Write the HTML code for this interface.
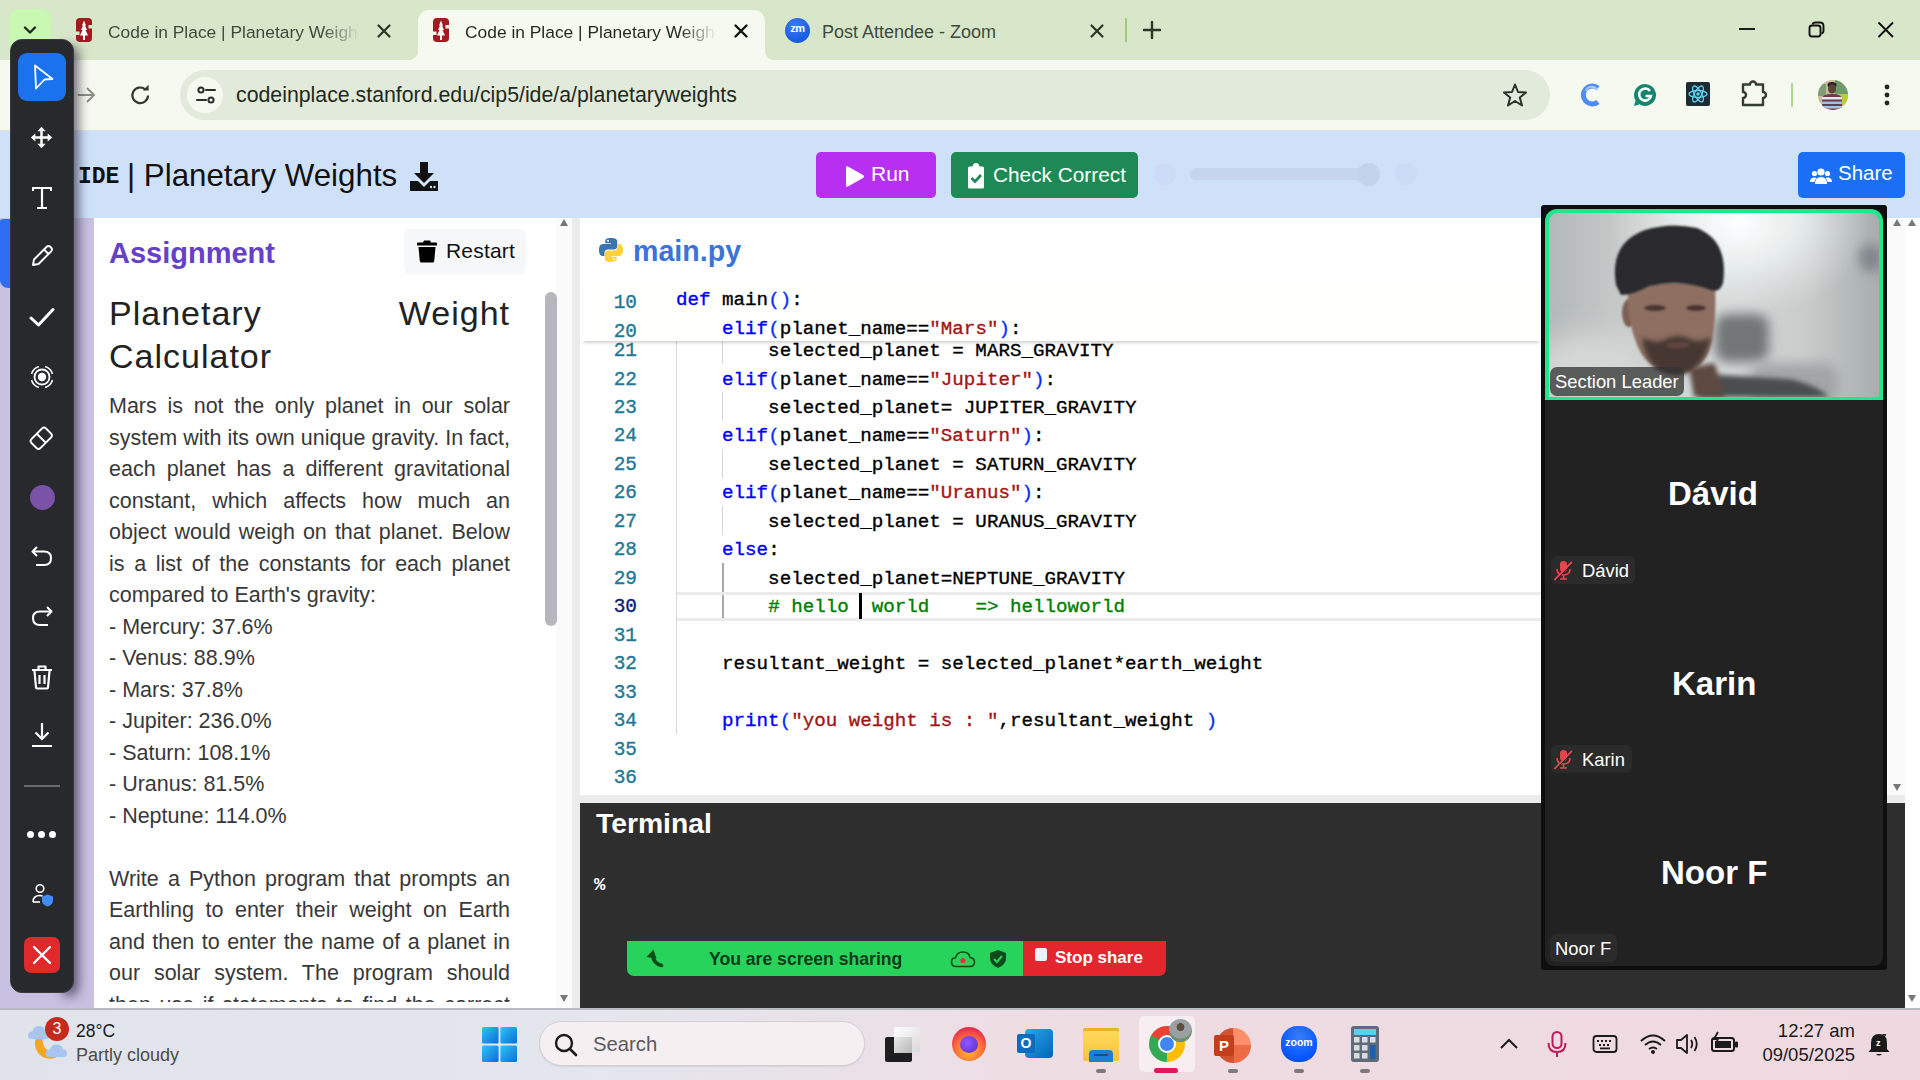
<!DOCTYPE html>
<html><head><meta charset="utf-8">
<style>
*{margin:0;padding:0;box-sizing:border-box}
html,body{width:1920px;height:1080px;overflow:hidden;background:#fff;font-family:"Liberation Sans",sans-serif}
.a{position:absolute}
.mono{font-family:"Liberation Mono",monospace}
#tabbar{left:0;top:0;width:1920px;height:60px;background:#d8e6ca}
#toolbar{left:0;top:60px;width:1920px;height:70px;background:#f6f9ef}
#sep{left:0;top:130px;width:1920px;height:1px;background:#dfe3dc}
#band{left:0;top:131px;width:1920px;height:87px;background:#cfe0f9}
#main{left:0;top:218px;width:1920px;height:790px;background:#fff}
#lav{left:0;top:218px;width:94px;height:790px;background:#c9c1e1}
#taskbar{left:0;top:1008px;width:1920px;height:72px;background:linear-gradient(90deg,#e0e4ea 0%,#e4e6ee 30%,#eedde3 55%,#efd9e0 100%)}
.tabt{font-size:18px;color:#3f4a3c;white-space:nowrap;top:20px}
.code{font-family:"Liberation Mono",monospace;font-size:19.2px;white-space:pre;color:#000;line-height:28.5px;height:28.5px;margin-top:1.8px;-webkit-text-stroke-width:0.35px}
.ln{font-family:"Liberation Mono",monospace;font-size:19.4px;color:#237893;text-align:right;width:60px;left:577px;line-height:28.5px;margin-top:1.8px;-webkit-text-stroke-width:0.35px}
.kw{color:#0000ff}
.br{color:#0431fa}
.st{color:#a31515}
.cm{color:#008000}
.jl{text-align:justify;text-align-last:justify;white-space:nowrap;height:31.5px}
.pl{white-space:nowrap;height:31.5px}
.ptxt{font-size:21.5px;color:#333;line-height:31.5px;left:109px;width:401px;text-align:justify;text-align-last:justify;white-space:nowrap}
</style></head><body>
<div id="tabbar" class="a"></div>
<div id="toolbar" class="a"></div>
<div id="sep" class="a"></div>
<div id="band" class="a"></div>
<div id="main" class="a"></div>
<div id="lav" class="a"></div>
<div id="taskbar" class="a"></div>

<!-- TAB BAR -->
<div class="a" style="left:9px;top:9px;width:42px;height:43px;border-radius:10px;background:#c8f8b2"></div>
<svg class="a" style="left:20px;top:20px" width="20" height="20" viewBox="0 0 20 20"><path d="M5 7.5 L10 12.5 L15 7.5" fill="none" stroke="#1f2a1c" stroke-width="2.4" stroke-linecap="round" stroke-linejoin="round"/></svg>
<!-- tab1 -->
<svg class="a" style="left:76px;top:18px" width="16" height="24" viewBox="0 0 16 24"><rect x="0" y="0" width="16" height="24" rx="4" fill="#a31b1f"/><rect x="12.5" y="7" width="3.5" height="3.5" fill="#d8e6ca"/><rect x="0" y="13.5" width="3.5" height="3.5" fill="#d8e6ca"/><path d="M8 2.5 L10 7.5 H9 L11 12 H9.5 L12 17.5 H9 V22 H7 V17.5 H4 L6.5 12 H5 L7 7.5 H6 Z" fill="#fff"/></svg>
<div class="a tabt" style="left:108px;top:22px;font-size:17.4px;width:252px;overflow:hidden;-webkit-mask-image:linear-gradient(90deg,#000 85%,transparent)">Code in Place | Planetary Weigh</div>
<svg class="a" style="left:375px;top:22px" width="18" height="18" viewBox="0 0 18 18"><path d="M3.5 3.5 L14.5 14.5 M14.5 3.5 L3.5 14.5" stroke="#2b3528" stroke-width="2.2" stroke-linecap="round"/></svg>
<!-- active tab -->
<div class="a" style="left:418px;top:10px;width:347px;height:50px;background:#f6f9ef;border-radius:11px 11px 0 0"></div>
<div class="a" style="left:408px;top:50px;width:10px;height:10px;background:radial-gradient(circle at 0 0,transparent 10px,#f6f9ef 10.5px)"></div>
<div class="a" style="left:765px;top:50px;width:10px;height:10px;background:radial-gradient(circle at 100% 0,transparent 10px,#f6f9ef 10.5px)"></div>
<svg class="a" style="left:433px;top:18px" width="16" height="24" viewBox="0 0 16 24"><rect x="0" y="0" width="16" height="24" rx="4" fill="#a31b1f"/><rect x="12.5" y="7" width="3.5" height="3.5" fill="#f6f9ef"/><rect x="0" y="13.5" width="3.5" height="3.5" fill="#f6f9ef"/><path d="M8 2.5 L10 7.5 H9 L11 12 H9.5 L12 17.5 H9 V22 H7 V17.5 H4 L6.5 12 H5 L7 7.5 H6 Z" fill="#fff"/></svg>
<div class="a tabt" style="left:465px;top:22px;font-size:17.4px;color:#1f2a1c;width:252px;overflow:hidden;-webkit-mask-image:linear-gradient(90deg,#000 85%,transparent)">Code in Place | Planetary Weigh</div>
<svg class="a" style="left:732px;top:22px" width="18" height="18" viewBox="0 0 18 18"><path d="M3.5 3.5 L14.5 14.5 M14.5 3.5 L3.5 14.5" stroke="#111" stroke-width="2.4" stroke-linecap="round"/></svg>
<!-- tab3 zoom -->
<div class="a" style="left:785px;top:18px;width:25px;height:25px;border-radius:50%;background:radial-gradient(circle at 40% 30%,#3d7bf5,#0b4fd8)"></div>
<div class="a" style="left:785px;top:22px;width:25px;text-align:center;font-size:11px;font-weight:bold;color:#fff;letter-spacing:-0.5px">zm</div>
<div class="a tabt" style="left:822px;top:22px;font-size:18px">Post Attendee - Zoom</div>
<svg class="a" style="left:1088px;top:22px" width="18" height="18" viewBox="0 0 18 18"><path d="M3.5 3.5 L14.5 14.5 M14.5 3.5 L3.5 14.5" stroke="#2b3528" stroke-width="2.2" stroke-linecap="round"/></svg>
<div class="a" style="left:1125px;top:18px;width:2px;height:24px;background:#9ccf7e"></div>
<svg class="a" style="left:1141px;top:19px" width="22" height="22" viewBox="0 0 22 22"><path d="M11 3 V19 M3 11 H19" stroke="#2b3528" stroke-width="2.4" stroke-linecap="round"/></svg>
<!-- window controls -->
<div class="a" style="left:1739px;top:28px;width:16px;height:2px;background:#1d1d1d"></div>
<svg class="a" style="left:1806px;top:20px" width="20" height="20" viewBox="0 0 20 20"><rect x="3.5" y="5.5" width="11" height="11" rx="2.5" fill="none" stroke="#111" stroke-width="1.9"/><path d="M6.5 4.5 Q7 2.5 9.5 2.5 H14 Q17.5 2.5 17.5 6 V10.5 Q17.5 13 15.5 13.5" fill="none" stroke="#111" stroke-width="1.9"/></svg>
<svg class="a" style="left:1877px;top:21px" width="18" height="18" viewBox="0 0 18 18"><path d="M1.5 1.5 L16 16 M16 1.5 L1.5 16" stroke="#111" stroke-width="1.9"/></svg>

<!-- TOOLBAR -->
<svg class="a" style="left:74px;top:83px" width="24" height="24" viewBox="0 0 24 24"><path d="M4 12 H20 M13 5 L20 12 L13 19" fill="none" stroke="#8a9088" stroke-width="2"/></svg>
<svg class="a" style="left:128px;top:82px" width="26" height="26" viewBox="0 0 26 26"><path d="M20 13.5 A7.8 7.8 0 1 1 17.5 7.6" fill="none" stroke="#333a31" stroke-width="2.2"/><path d="M14.8 8.6 H20.6 V2.8 Z" fill="#333a31"/></svg>
<div class="a" style="left:180px;top:70px;width:1370px;height:50px;border-radius:25px;background:#e2eadb"></div>
<div class="a" style="left:187px;top:77px;width:36px;height:36px;border-radius:50%;background:#f6f9ef"></div>
<svg class="a" style="left:194px;top:83px" width="24" height="24" viewBox="0 0 24 24"><circle cx="7" cy="7" r="2.6" fill="none" stroke="#2b2f2a" stroke-width="2"/><path d="M12 7 H21" stroke="#2b2f2a" stroke-width="2.2" stroke-linecap="round"/><circle cx="17" cy="17" r="2.6" fill="none" stroke="#2b2f2a" stroke-width="2"/><path d="M3 17 H12" stroke="#2b2f2a" stroke-width="2.2" stroke-linecap="round"/></svg>
<div class="a" style="left:236px;top:83px;font-size:21.3px;color:#1f2a1c;white-space:nowrap">codeinplace.stanford.edu/cip5/ide/a/planetaryweights</div>
<svg class="a" style="left:1502px;top:82px" width="26" height="26" viewBox="0 0 26 26"><path d="M13 2.5 L16 10 L24 10.5 L17.8 15.5 L20 23.5 L13 19 L6 23.5 L8.2 15.5 L2 10.5 L10 10 Z" fill="none" stroke="#2b3228" stroke-width="2" stroke-linejoin="round"/></svg>
<svg class="a" style="left:1578px;top:82px" width="26" height="26" viewBox="0 0 26 26"><path d="M20 6 A9 9 0 1 0 20 20" fill="none" stroke="#4d8df0" stroke-width="5"/><path d="M19 8 A6 6 0 0 0 8 9" fill="none" stroke="#a9c8fa" stroke-width="2"/></svg>
<svg class="a" style="left:1632px;top:82px" width="26" height="26" viewBox="0 0 26 26"><path d="M13 2 A11 11 0 1 1 3.5 18.5 L2 24 L7.5 22.5 A11 11 0 0 1 13 2Z" fill="#15846e"/><path d="M18 9 A6 6 0 1 0 19 14 H13.5" fill="none" stroke="#fff" stroke-width="2.6"/></svg>
<div class="a" style="left:1686px;top:82px;width:24px;height:24px;background:#1d2b34;border-radius:2px"></div>
<svg class="a" style="left:1686px;top:82px" width="24" height="24" viewBox="0 0 24 24"><ellipse cx="12" cy="12" rx="9" ry="3.5" fill="none" stroke="#5ed3f3" stroke-width="1.3"/><ellipse cx="12" cy="12" rx="9" ry="3.5" fill="none" stroke="#5ed3f3" stroke-width="1.3" transform="rotate(60 12 12)"/><ellipse cx="12" cy="12" rx="9" ry="3.5" fill="none" stroke="#5ed3f3" stroke-width="1.3" transform="rotate(-60 12 12)"/><circle cx="12" cy="12" r="1.8" fill="#5ed3f3"/></svg>
<svg class="a" style="left:1740px;top:80px" width="28" height="28" viewBox="0 0 28 28"><path d="M3 4.5 H10 A3 3 0 0 1 16 4.5 H23 V12 A3 3 0 0 1 23 18 V25 H3 V18 A3 3 0 0 0 3 12 Z" fill="none" stroke="#333d30" stroke-width="2.4" stroke-linejoin="round"/></svg>
<div class="a" style="left:1791px;top:83px;width:2px;height:24px;background:#a8dc8c"></div>
<svg class="a" style="left:1818px;top:80px" width="30" height="30" viewBox="0 0 30 30"><defs><clipPath id="avc"><circle cx="15" cy="15" r="15"/></clipPath></defs><g clip-path="url(#avc)"><rect width="30" height="30" fill="#c8bd98"/><rect x="17" y="0" width="13" height="14" fill="#6f9a6a"/><rect x="22" y="14" width="8" height="12" fill="#b9cc3c"/><rect x="0" y="4" width="8" height="12" fill="#7e9d78"/><ellipse cx="14" cy="5" rx="4.5" ry="3" fill="#2b2623"/><ellipse cx="14" cy="9" rx="4" ry="4.5" fill="#5c4637"/><path d="M4 30 V19 Q4 14 14 14 Q24 14 24 19 V30 Z" fill="#6b3a4e"/><rect x="4" y="17" width="20" height="2.5" fill="#e6e6ee"/><rect x="4" y="21.5" width="20" height="2.5" fill="#9fc0e6"/><rect x="4" y="26" width="20" height="2.5" fill="#a0c4ea"/></g></svg>
<svg class="a" style="left:1877px;top:82px" width="20" height="26" viewBox="0 0 20 26"><circle cx="10" cy="5" r="2.4" fill="#1f2a1c"/><circle cx="10" cy="13" r="2.4" fill="#1f2a1c"/><circle cx="10" cy="21" r="2.4" fill="#1f2a1c"/></svg>

<!-- HEADER BAND -->
<div class="a" style="left:78px;top:164px;font-family:'Liberation Mono',monospace;font-weight:bold;font-size:23px;color:#111;white-space:nowrap">IDE</div>
<div class="a" style="left:127px;top:158px;font-size:31.3px;color:#111;white-space:nowrap">| Planetary Weights</div>
<svg class="a" style="left:408px;top:160px" width="32" height="32" viewBox="0 0 32 32"><path d="M12 2 H20 V13 H26 L16 23 L6 13 H12 Z" fill="#111"/><path d="M2 21 H10 L16 27 L22 21 H30 V31 H2 Z" fill="#111"/><circle cx="23" cy="27" r="1.2" fill="#cfe0f9"/><circle cx="26.5" cy="27" r="1.2" fill="#cfe0f9"/></svg>
<div class="a" style="left:816px;top:152px;width:120px;height:46px;border-radius:5px;background:#b730f1"></div>
<svg class="a" style="left:844px;top:165px" width="22" height="23" viewBox="0 0 22 23"><path d="M2 2.5 Q2 0.5 4 1.5 L19 10 Q21 11.5 19 13 L4 21.5 Q2 22.5 2 20.5 Z" fill="#fff"/></svg>
<div class="a" style="left:871px;top:162px;font-size:21px;color:#fff;white-space:nowrap">Run</div>
<div class="a" style="left:951px;top:152px;width:187px;height:46px;border-radius:5px;background:#1d8a55"></div>
<svg class="a" style="left:966px;top:163px" width="20" height="26" viewBox="0 0 20 26"><path d="M2 5 Q2 3.5 3.5 3.5 H6.5 Q7 0 10 0 Q13 0 13.5 3.5 H16.5 Q18 3.5 18 5 V24 Q18 25.5 16.5 25.5 H3.5 Q2 25.5 2 24 Z" fill="#fff"/><path d="M5.5 15 L9 18.5 L15 12" fill="none" stroke="#1d8a55" stroke-width="2.6"/></svg>
<div class="a" style="left:993px;top:162.5px;font-size:20.8px;color:#fff;white-space:nowrap">Check Correct</div>
<div class="a" style="left:1154px;top:163px;width:22px;height:22px;border-radius:50%;background:#ccdcf6"></div>
<div class="a" style="left:1190px;top:168px;width:190px;height:12px;border-radius:6px;background:#c5d5ee"></div>
<div class="a" style="left:1357px;top:163px;width:23px;height:23px;border-radius:50%;background:#c3d3ec"></div>
<div class="a" style="left:1395px;top:163px;width:22px;height:22px;border-radius:50%;background:#ccdcf6"></div>
<div class="a" style="left:1798px;top:152px;width:107px;height:46px;border-radius:5px;background:#1b6ff4"></div>
<svg class="a" style="left:1810px;top:166px" width="22" height="20" viewBox="0 0 22 20"><circle cx="11" cy="6" r="3.6" fill="#fff"/><circle cx="4.5" cy="7.5" r="2.6" fill="#fff"/><circle cx="17.5" cy="7.5" r="2.6" fill="#fff"/><path d="M5 18 Q5 11 11 11 Q17 11 17 18 Z" fill="#fff"/><path d="M0 16 Q0 11.5 4.5 11.5 Q6 11.5 6.5 12 Q4.5 14 4.5 16 Z" fill="#fff"/><path d="M22 16 Q22 11.5 17.5 11.5 Q16 11.5 15.5 12 Q17.5 14 17.5 16 Z" fill="#fff"/></svg>
<div class="a" style="left:1838px;top:161px;font-size:20.5px;color:#fff;white-space:nowrap">Share</div>

<!-- MAIN PANELS -->
<div class="a" style="left:556px;top:218px;width:16px;height:790px;background:#fafafa"></div>
<div class="a" style="left:572px;top:218px;width:8px;height:790px;background:#ebebeb"></div>
<div class="a" style="left:560px;top:219px;width:0;height:0;border-left:4.5px solid transparent;border-right:4.5px solid transparent;border-bottom:7px solid #777"></div>
<div class="a" style="left:560px;top:995px;width:0;height:0;border-left:4.5px solid transparent;border-right:4.5px solid transparent;border-top:7px solid #777"></div>
<div class="a" style="left:545px;top:292px;width:12px;height:334px;border-radius:6px;background:#b7b6bc"></div>
<div class="a" style="left:109px;top:237px;font-size:29px;font-weight:bold;color:#6541c9;white-space:nowrap">Assignment</div>
<div class="a" style="left:404px;top:229px;width:122px;height:45px;border-radius:6px;background:#f6f7f9"></div>
<svg class="a" style="left:417px;top:240px" width="20" height="23" viewBox="0 0 20 23"><path d="M7 0.5 H13 L14 2.5 H19 Q20 2.5 20 3.5 V5.5 H0 V3.5 Q0 2.5 1 2.5 H6 Z" fill="#000"/><path d="M1.5 7 H18.5 L17.2 21 Q17 22.5 15.5 22.5 H4.5 Q3 22.5 2.8 21 Z" fill="#000"/></svg>
<div class="a" style="left:446px;top:239px;font-size:21px;color:#111;white-space:nowrap;letter-spacing:0.2px">Restart</div>
<div class="a" style="left:109px;top:292px;width:401px;font-size:34px;color:#222;line-height:43px;letter-spacing:1px">
<div style="text-align:justify;text-align-last:justify">Planetary Weight</div><div>Calculator</div></div>
<div class="a" id="para" style="left:109px;top:391px;width:401px;height:611px;overflow:hidden;font-size:21.5px;color:#383838;line-height:31.5px"><div class="jl">Mars is not the only planet in our solar</div><div class="jl">system with its own unique gravity. In fact,</div><div class="jl">each planet has a different gravitational</div><div class="jl">constant, which affects how much an</div><div class="jl">object would weigh on that planet. Below</div><div class="jl">is a list of the constants for each planet</div><div class="pl">compared to Earth's gravity:</div><div class="pl">- Mercury: 37.6%</div><div class="pl">- Venus: 88.9%</div><div class="pl">- Mars: 37.8%</div><div class="pl">- Jupiter: 236.0%</div><div class="pl">- Saturn: 108.1%</div><div class="pl">- Uranus: 81.5%</div><div class="pl">- Neptune: 114.0%</div><div class="pl">&nbsp;</div><div class="jl">Write a Python program that prompts an</div><div class="jl">Earthling to enter their weight on Earth</div><div class="jl">and then to enter the name of a planet in</div><div class="jl">our solar system. The program should</div><div class="jl">then use if statements to find the correct</div></div>

<!-- EDITOR -->
<div class="a" style="left:598px;top:237px"><svg width="26" height="26" viewBox="0 0 26 26"><path d="M12.8 1 C7 1 7.3 3.5 7.3 3.5 V6.2 H13 V7 H5 C5 7 1 6.6 1 12.9 C1 19.2 4.4 19 4.4 19 H6.5 V16 C6.5 16 6.4 12.5 10 12.5 H15.8 C15.8 12.5 19.2 12.6 19.2 9.3 V4 C19.2 4 19.7 1 12.8 1Z" fill="#3a75b0"/><circle cx="10" cy="3.8" r="1" fill="#fff"/><path d="M13.2 25 C19 25 18.7 22.5 18.7 22.5 V19.8 H13 V19 H21 C21 19 25 19.4 25 13.1 C25 6.8 21.6 7 21.6 7 H19.5 V10 C19.5 10 19.6 13.5 16 13.5 H10.2 C10.2 13.5 6.8 13.4 6.8 16.7 V22 C6.8 22 6.3 25 13.2 25Z" fill="#fdd23a"/><circle cx="16" cy="22.2" r="1" fill="#fff"/></svg></div>
<div class="a" style="left:633px;top:235px;font-size:28.6px;font-weight:bold;color:#3b74d9;white-space:nowrap">main.py</div>
<div class="a" style="left:676px;top:341px;width:1px;height:393px;background:#d6d6d6"></div>
<div class="a" style="left:722px;top:341.0px;width:1px;height:22.8px;background:#d6d6d6"></div>
<div class="a" style="left:722px;top:392.2px;width:1px;height:28.5px;background:#d6d6d6"></div>
<div class="a" style="left:722px;top:449.2px;width:1px;height:28.5px;background:#d6d6d6"></div>
<div class="a" style="left:722px;top:506.1px;width:1px;height:28.5px;background:#d6d6d6"></div>
<div class="a" style="left:722px;top:563.1px;width:1.5px;height:57.4px;background:#a8a8a8"></div>
<div class="a" style="left:677px;top:591.5px;width:870px;height:29px;border:3px solid #ebebeb;border-right:none;border-left:none"></div>
<div class="a ln" style="top:335.3px">21</div>
<div class="a code" style="left:676px;top:335.3px">        selected_planet = MARS_GRAVITY</div>
<div class="a ln" style="top:363.8px">22</div>
<div class="a code" style="left:676px;top:363.8px">    <span class="kw">elif</span><span class="br">(</span>planet_name==<span class="st">"Jupiter"</span><span class="br">)</span>:</div>
<div class="a ln" style="top:392.2px">23</div>
<div class="a code" style="left:676px;top:392.2px">        selected_planet= JUPITER_GRAVITY</div>
<div class="a ln" style="top:420.7px">24</div>
<div class="a code" style="left:676px;top:420.7px">    <span class="kw">elif</span><span class="br">(</span>planet_name==<span class="st">"Saturn"</span><span class="br">)</span>:</div>
<div class="a ln" style="top:449.2px">25</div>
<div class="a code" style="left:676px;top:449.2px">        selected_planet = SATURN_GRAVITY</div>
<div class="a ln" style="top:477.6px">26</div>
<div class="a code" style="left:676px;top:477.6px">    <span class="kw">elif</span><span class="br">(</span>planet_name==<span class="st">"Uranus"</span><span class="br">)</span>:</div>
<div class="a ln" style="top:506.1px">27</div>
<div class="a code" style="left:676px;top:506.1px">        selected_planet = URANUS_GRAVITY</div>
<div class="a ln" style="top:534.6px">28</div>
<div class="a code" style="left:676px;top:534.6px">    <span class="kw">else</span>:</div>
<div class="a ln" style="top:563.1px">29</div>
<div class="a code" style="left:676px;top:563.1px">        selected_planet=NEPTUNE_GRAVITY</div>
<div class="a ln" style="top:591.5px;color:#0b216f">30</div>
<div class="a code" style="left:676px;top:591.5px">        <span class="cm"># hello  world    =&gt; helloworld</span></div>
<div class="a ln" style="top:620.0px">31</div>
<div class="a ln" style="top:648.5px">32</div>
<div class="a code" style="left:676px;top:648.5px">    resultant_weight = selected_planet*earth_weight</div>
<div class="a ln" style="top:676.9px">33</div>
<div class="a ln" style="top:705.4px">34</div>
<div class="a code" style="left:676px;top:705.4px">    <span class="kw">print</span><span class="br">(</span><span class="st">"you weight is : "</span>,resultant_weight <span class="br">)</span></div>
<div class="a ln" style="top:733.9px">35</div>
<div class="a ln" style="top:762.3px">36</div>
<div class="a" style="left:859px;top:592.5px;width:3px;height:26.5px;background:#000"></div>
<div class="a" style="left:583px;top:284px;width:957px;height:57px;background:#fffffe;box-shadow:0 3px 3px -1px rgba(0,0,0,.18)"></div>
<div class="a ln" style="top:287.5px">10</div>
<div class="a code" style="left:676px;top:284.5px"><span class="kw">def</span> main<span class="br">()</span>:</div>
<div class="a ln" style="top:316.5px">20</div>
<div class="a code" style="left:676px;top:313.5px">    <span class="kw">elif</span><span class="br">(</span>planet_name==<span class="st">"Mars"</span><span class="br">)</span>:</div>

<!-- RIGHT SCROLL AREA / TERMINAL -->
<div class="a" style="left:1886px;top:218px;width:19px;height:576px;background:#fafafa"></div>
<div class="a" style="left:580px;top:795px;width:1325px;height:8px;background:#ebebeb"></div>
<div class="a" style="left:1905px;top:218px;width:15px;height:790px;background:#fff"></div>
<div class="a" style="left:1893px;top:219px;width:0;height:0;border-left:4.5px solid transparent;border-right:4.5px solid transparent;border-bottom:7px solid #777"></div>
<div class="a" style="left:1908px;top:219px;width:0;height:0;border-left:4.5px solid transparent;border-right:4.5px solid transparent;border-bottom:7px solid #777"></div>
<div class="a" style="left:1893px;top:784px;width:0;height:0;border-left:4.5px solid transparent;border-right:4.5px solid transparent;border-top:7px solid #777"></div>
<div class="a" style="left:1908px;top:995px;width:0;height:0;border-left:4.5px solid transparent;border-right:4.5px solid transparent;border-top:7px solid #777"></div>
<div class="a" style="left:580px;top:803px;width:1325px;height:205px;background:#2e2e2e"></div>
<div class="a" style="left:596px;top:807px;font-size:28.3px;font-weight:bold;color:#fff;white-space:nowrap">Terminal</div>
<div class="a" style="left:594px;top:874px;font-size:19px;font-weight:bold;color:#fff;font-family:'Liberation Mono',monospace">%</div>
<!-- screen share bar -->
<div class="a" style="left:627px;top:941px;width:396px;height:35px;background:#27d35a;border-radius:0 0 0 7px"></div>
<div class="a" style="left:1023px;top:941px;width:143px;height:35px;background:#e3262e;border-radius:0 0 7px 0"></div>
<svg class="a" style="left:645px;top:948px" width="22" height="22" viewBox="0 0 22 22"><path d="M1.5 9 L8.5 1.5 L11.5 10.5 Z" fill="#0b4d17"/><path d="M7.5 7 Q8.5 15.5 16.5 17.5" fill="none" stroke="#0b4d17" stroke-width="3.6" stroke-linecap="round"/></svg>
<div class="a" style="left:709px;top:948.5px;font-size:17.6px;font-weight:bold;color:#0c3c1b;white-space:nowrap">You are screen sharing</div>
<svg class="a" style="left:950px;top:950px" width="26" height="18" viewBox="0 0 26 18"><path d="M6 16.5 Q1.5 16.5 1.5 12 Q1.5 8 5.5 7.8 Q7 2 13 2 Q19 2 20 7.5 Q24.5 8 24.5 12 Q24.5 16.5 20 16.5 Z" fill="none" stroke="#0c4a1c" stroke-width="1.6"/><circle cx="13" cy="10.5" r="2.6" fill="#e8303a"/></svg>
<svg class="a" style="left:988px;top:949px" width="20" height="20" viewBox="0 0 20 20"><path d="M10 1 L18 4 V9.5 Q18 15.5 10 19 Q2 15.5 2 9.5 V4 Z" fill="#0c4a1c"/><path d="M6 10 L9 13 L14 7" fill="none" stroke="#27d35a" stroke-width="2"/></svg>
<div class="a" style="left:1035px;top:948px;width:12px;height:13px;background:#e8f4ff;border-radius:2px"></div>
<div class="a" style="left:1055px;top:948px;font-size:17px;font-weight:bold;color:#fff;white-space:nowrap">Stop share</div>

<!-- ZOOM PANEL -->
<div class="a" style="left:1541px;top:205px;width:346px;height:765px;background:#0e0e0e;border-radius:3px"></div>
<div class="a" style="left:1545px;top:400px;width:338px;height:566px;background:#222222;border-radius:0 0 9px 9px"></div>
<div class="a" style="left:1545px;top:209px;width:338px;height:191px;border-radius:12px 12px 0 0;background:#22e68c;overflow:hidden">
 <div class="a" style="left:4px;top:4px;width:330px;height:184px;border-radius:9px 9px 0 0;overflow:hidden">
 <svg width="330" height="184" viewBox="0 0 330 184">
  <defs>
   <filter id="vb1" x="-20%" y="-20%" width="140%" height="140%"><feGaussianBlur stdDeviation="1.3"/></filter>
   <filter id="vb2" x="-20%" y="-20%" width="140%" height="140%"><feGaussianBlur stdDeviation="2.5"/></filter>
   <filter id="vb5" x="-50%" y="-50%" width="200%" height="200%"><feGaussianBlur stdDeviation="6"/></filter>
   <filter id="vb12" x="-50%" y="-50%" width="200%" height="200%"><feGaussianBlur stdDeviation="14"/></filter>
   <linearGradient id="vbg" x1="0" y1="0" x2="1" y2="0"><stop offset="0" stop-color="#b3b9b8"/><stop offset=".25" stop-color="#c8cdcc"/><stop offset=".5" stop-color="#d5dad9"/><stop offset=".78" stop-color="#c8cdcc"/><stop offset="1" stop-color="#a8aead"/></linearGradient>
   <radialGradient id="vgl" cx=".5" cy=".5" r=".5"><stop offset="0" stop-color="#fdffff"/><stop offset=".45" stop-color="#eef4f3" stop-opacity=".8"/><stop offset="1" stop-color="#e0e6e5" stop-opacity="0"/></radialGradient>
  </defs>
  <rect width="330" height="184" fill="url(#vbg)"/>
  <ellipse cx="190" cy="10" rx="130" ry="95" fill="url(#vgl)"/>
  <ellipse cx="40" cy="160" rx="60" ry="40" fill="#d4d8d7" filter="url(#vb12)"/>
  <rect x="166" y="101" width="54" height="48" rx="12" fill="#727677" filter="url(#vb5)"/>
  <rect x="200" y="150" width="90" height="40" rx="15" fill="#a2a6a6" filter="url(#vb5)"/>
  <ellipse cx="322" cy="45" rx="12" ry="14" fill="#80858a" filter="url(#vb5)"/>
  <path d="M150 184 Q152 168 172 162 L240 166 Q268 172 280 184 Z" fill="#4b4d4f" filter="url(#vb2)"/>
  <path d="M140 155 L165 150 Q172 165 176 184 L145 184 Z" fill="#5b4840" filter="url(#vb2)"/>
  <ellipse cx="80" cy="100" rx="7" ry="14" fill="#7d6154" filter="url(#vb1)"/>
  <path d="M79 70 Q77 112 92 140 Q108 163 130 161 Q152 158 160 138 Q168 116 166 70 Z" fill="#8e7062" filter="url(#vb1)"/>
  <path d="M93 124 Q98 162 129 162 Q154 160 162 124 Q150 131 141 126 Q129 120 117 126 Q106 132 93 124 Z" fill="#3e302c" fill-opacity=".9" filter="url(#vb2)"/>
  <ellipse cx="129" cy="132" rx="12" ry="3.5" fill="#5e4540" filter="url(#vb1)"/>
  <path d="M67 72 Q60 30 96 17 Q122 9 148 15 Q180 28 174 70 Q171 80 162 77 Q132 66 100 73 Q84 82 72 82 Z" fill="#2c2b2e" filter="url(#vb1)"/>
  <ellipse cx="106" cy="95" rx="11" ry="3" fill="#4a3630" filter="url(#vb1)"/>
  <ellipse cx="147" cy="95" rx="10" ry="3" fill="#4a3630" filter="url(#vb1)"/>
 </svg>
 </div>
</div>
<div class="a" style="left:1550px;top:367px;width:134px;height:29px;border-radius:7px;background:rgba(50,50,50,.75)"></div>
<div class="a" style="left:1555px;top:371px;font-size:18.4px;color:#fff;white-space:nowrap">Section Leader</div>
<div class="a" style="left:1668px;top:475px;font-size:33px;font-weight:bold;color:#fff;white-space:nowrap">Dávid</div>
<div class="a" style="left:1551px;top:556px;width:84px;height:28px;border-radius:6px;background:#2b2b2b"></div>
<div class="a" style="left:1552px;top:559px"><svg width="22" height="22" viewBox="0 0 22 22"><rect x="8" y="2" width="7" height="11" rx="3.5" fill="#e8464e"/><path d="M5 10 Q5 16 11.5 16 Q18 16 18 10" fill="none" stroke="#e8464e" stroke-width="1.6"/><path d="M11.5 16 V20 M8 20 H15" stroke="#e8464e" stroke-width="1.6"/><path d="M2.5 21 L20 3" stroke="#e8464e" stroke-width="1.8"/><path d="M3.8 21.5 L21.3 3.5" stroke="#222" stroke-width="1"/></svg></div>
<div class="a" style="left:1582px;top:560px;font-size:18.4px;color:#fff;white-space:nowrap">Dávid</div>
<div class="a" style="left:1672px;top:665px;font-size:33px;font-weight:bold;color:#fff;white-space:nowrap">Karin</div>
<div class="a" style="left:1551px;top:745px;width:81px;height:28px;border-radius:6px;background:#2b2b2b"></div>
<div class="a" style="left:1552px;top:748px"><svg width="22" height="22" viewBox="0 0 22 22"><rect x="8" y="2" width="7" height="11" rx="3.5" fill="#e8464e"/><path d="M5 10 Q5 16 11.5 16 Q18 16 18 10" fill="none" stroke="#e8464e" stroke-width="1.6"/><path d="M11.5 16 V20 M8 20 H15" stroke="#e8464e" stroke-width="1.6"/><path d="M2.5 21 L20 3" stroke="#e8464e" stroke-width="1.8"/><path d="M3.8 21.5 L21.3 3.5" stroke="#222" stroke-width="1"/></svg></div>
<div class="a" style="left:1582px;top:749px;font-size:18.4px;color:#fff;white-space:nowrap">Karin</div>
<div class="a" style="left:1661px;top:854px;font-size:33px;font-weight:bold;color:#fff;white-space:nowrap">Noor F</div>
<div class="a" style="left:1550px;top:934px;width:67px;height:28px;border-radius:6px;background:#2b2b2b"></div>
<div class="a" style="left:1555px;top:938px;font-size:18.4px;color:#fff;white-space:nowrap">Noor F</div>

<!-- TASKBAR -->
<div class="a" style="left:0;top:1008px;width:1920px;height:2px;background:#b9bcbf"></div>
<svg class="a" style="left:26px;top:1015px" width="46" height="46" viewBox="0 0 46 46">
 <path d="M9 27 A15 15 0 0 0 37 36 A13 13 0 0 1 17 22 A13 13 0 0 1 19 15 A15 15 0 0 0 9 27 Z" fill="#f5a524"/>
 <path d="M6 24 Q2 24 2 20.5 Q2 16.5 6.5 16.5 Q7.5 11 13 11 Q18.5 11 19.5 16.5 Q23.5 16.5 23.5 20.5 Q23.5 24 20 24 Z" fill="#a8c5f0"/>
 <path d="M23 42 Q19.5 42 19.5 38.5 Q19.5 34.5 24 34.5 Q25 29.5 30.5 29.5 Q36 29.5 37 34.5 Q41 34.5 41 38.5 Q41 42 37.5 42 Z" fill="#a8c5f0"/>
</svg>
<div class="a" style="left:45px;top:1017px;width:24px;height:24px;border-radius:50%;background:#c42b1c;color:#fff;font-size:16px;text-align:center;line-height:24px">3</div>
<div class="a" style="left:76px;top:1021px;font-size:17.5px;color:#1b1b1b;white-space:nowrap">28°C</div>
<div class="a" style="left:76px;top:1045px;font-size:18px;color:#4b4b4b;white-space:nowrap">Partly cloudy</div>
<svg class="a" style="left:482px;top:1027px" width="35" height="35" viewBox="0 0 35 35"><defs><linearGradient id="wg" x1="0" y1="0" x2="1" y2="1"><stop offset="0" stop-color="#30c3f5"/><stop offset="1" stop-color="#0a6fd6"/></linearGradient></defs><rect x="0" y="0" width="16.6" height="16.6" rx="1.5" fill="url(#wg)"/><rect x="18.4" y="0" width="16.6" height="16.6" rx="1.5" fill="url(#wg)"/><rect x="0" y="18.4" width="16.6" height="16.6" rx="1.5" fill="url(#wg)"/><rect x="18.4" y="18.4" width="16.6" height="16.6" rx="1.5" fill="url(#wg)"/></svg>
<div class="a" style="left:539px;top:1021px;width:326px;height:45px;border-radius:23px;background:#f5eff2;border:1px solid #d6cfd3;box-shadow:0 1px 1px rgba(0,0,0,.08)"></div>
<svg class="a" style="left:553px;top:1032px" width="26" height="26" viewBox="0 0 26 26"><circle cx="11" cy="11" r="8" fill="none" stroke="#1b1b1b" stroke-width="2.4"/><path d="M17 17 L23 23" stroke="#1b1b1b" stroke-width="2.6" stroke-linecap="round"/></svg>
<div class="a" style="left:593px;top:1033px;font-size:20.3px;color:#5a5a5a;white-space:nowrap">Search</div>
<!-- task view -->
<div class="a" style="left:894px;top:1027px;width:26px;height:25px;background:linear-gradient(135deg,#fff,#d9d9d9);border-radius:2px"></div>
<div class="a" style="left:885px;top:1037px;width:27px;height:25px;background:#1e1e1e;border-radius:2px"></div>
<div class="a" style="left:894px;top:1037px;width:18px;height:16px;background:linear-gradient(135deg,#e8e8e8,#b8b8b8)"></div>
<!-- firefox -->
<div class="a" style="left:952px;top:1027px;width:34px;height:34px;border-radius:50%;background:radial-gradient(circle at 50% 70%,#ffbd2e 0%,#ff7139 45%,#e22850 80%)"></div>
<div class="a" style="left:960px;top:1036px;width:18px;height:17px;border-radius:50%;background:radial-gradient(circle at 40% 40%,#9059ff,#592acb)"></div>
<!-- outlook -->
<div class="a" style="left:1025px;top:1029px;width:28px;height:29px;border-radius:4px;background:linear-gradient(135deg,#28a8ea,#0364b8)"></div>
<div class="a" style="left:1017px;top:1034px;width:18px;height:19px;border-radius:2px;background:#0f6cbd;color:#fff;font-weight:bold;font-size:14px;text-align:center;line-height:19px">O</div>
<!-- explorer -->
<div class="a" style="left:1083px;top:1028px;width:36px;height:7px;border-radius:2px 2px 0 0;background:#e7b523"></div>
<div class="a" style="left:1083px;top:1031px;width:36px;height:30px;border-radius:2px;background:linear-gradient(180deg,#ffd95c,#f8c13a)"></div>
<div class="a" style="left:1089px;top:1050px;width:24px;height:12px;border-radius:4px 4px 0 0;background:#1b7fd6"></div>
<div class="a" style="left:1094px;top:1054px;width:14px;height:2px;background:#0b4f94"></div>
<div class="a" style="left:1096px;top:1069px;width:10px;height:4px;border-radius:2px;background:#7c7a7c"></div>
<!-- chrome active -->
<div class="a" style="left:1139px;top:1016px;width:56px;height:56px;border-radius:5px;background:rgba(255,255,255,.5)"></div>
<div class="a" style="left:1149px;top:1026px;width:36px;height:36px;border-radius:50%;background:conic-gradient(from -60deg,#ea4335 0 120deg,#fbbc04 120deg 240deg,#34a853 240deg 360deg)"></div>
<div class="a" style="left:1158px;top:1035px;width:18px;height:18px;border-radius:50%;background:#4285f4;border:2.5px solid #fff"></div>
<div class="a" style="left:1169px;top:1019px;width:23px;height:23px;border-radius:50%;background:radial-gradient(circle at 50% 35%,#5e4d43 0 20%,#9aa0a4 22% 60%,#6f8f6f 62%)"></div>
<div class="a" style="left:1154px;top:1068px;width:24px;height:5px;border-radius:3px;background:#e0175c"></div>
<!-- powerpoint -->
<div class="a" style="left:1216px;top:1028px;width:35px;height:35px;border-radius:50%;background:conic-gradient(#ff8f6b 0 90deg,#ed6c47 90deg 180deg,#d35230 180deg 360deg)"></div>
<div class="a" style="left:1214px;top:1035px;width:20px;height:21px;border-radius:2px;background:#c43e1c;color:#fff;font-weight:bold;font-size:15px;text-align:center;line-height:21px">P</div>
<div class="a" style="left:1228px;top:1069px;width:10px;height:4px;border-radius:2px;background:#7c7a7c"></div>
<!-- zoom -->
<div class="a" style="left:1281px;top:1026px;width:36px;height:36px;border-radius:45%;background:radial-gradient(circle at 50% 30%,#3b7cf8,#0b5cff 60%,#0846c8)"></div>
<div class="a" style="left:1281px;top:1036px;width:36px;text-align:center;font-size:10.5px;font-weight:bold;color:#fff">zoom</div>
<div class="a" style="left:1294px;top:1069px;width:10px;height:4px;border-radius:2px;background:#7c7a7c"></div>
<!-- calculator -->
<div class="a" style="left:1351px;top:1026px;width:28px;height:36px;border-radius:3px;background:#5f6b78"></div>
<div class="a" style="left:1354px;top:1029px;width:22px;height:6px;background:#5bd0f0"></div>
<svg class="a" style="left:1354px;top:1037px" width="22" height="23" viewBox="0 0 22 23"><g fill="#d9dde2"><rect x="0" y="0" width="5.5" height="5.5"/><rect x="8" y="0" width="5.5" height="5.5"/><rect x="16" y="0" width="5.5" height="5.5"/><rect x="0" y="8" width="5.5" height="5.5"/><rect x="8" y="8" width="5.5" height="5.5"/><rect x="0" y="16" width="5.5" height="5.5"/><rect x="8" y="16" width="5.5" height="5.5"/></g><rect x="16" y="8" width="5.5" height="14" fill="#1f5fa8"/></svg>
<div class="a" style="left:1360px;top:1069px;width:10px;height:4px;border-radius:2px;background:#7c7a7c"></div>
<!-- tray -->
<svg class="a" style="left:1497px;top:1034px" width="24" height="20" viewBox="0 0 24 20"><path d="M4 14 L12 6 L20 14" fill="none" stroke="#1b1b1b" stroke-width="2"/></svg>
<svg class="a" style="left:1545px;top:1030px" width="24" height="30" viewBox="0 0 24 30"><rect x="7.5" y="2" width="9" height="16" rx="4.5" fill="none" stroke="#c2185b" stroke-width="2"/><path d="M3.5 13 Q3.5 22 12 22 Q20.5 22 20.5 13 M12 22 V27" fill="none" stroke="#c2185b" stroke-width="2"/></svg>
<svg class="a" style="left:1592px;top:1032px" width="26" height="24" viewBox="0 0 26 24"><rect x="1.5" y="4" width="23" height="16" rx="3" fill="none" stroke="#1b1b1b" stroke-width="1.8"/><g fill="#1b1b1b"><rect x="5" y="8" width="2" height="2"/><rect x="9" y="8" width="2" height="2"/><rect x="13" y="8" width="2" height="2"/><rect x="17" y="8" width="2" height="2"/><rect x="7" y="12" width="2" height="2"/><rect x="11" y="12" width="2" height="2"/><rect x="15" y="12" width="2" height="2"/><rect x="8" y="15.5" width="10" height="1.8"/></g></svg>
<svg class="a" style="left:1639px;top:1032px" width="28" height="24" viewBox="0 0 28 24"><path d="M2 9 Q14 -2 26 9" fill="none" stroke="#1b1b1b" stroke-width="2"/><path d="M6 13 Q14 6 22 13" fill="none" stroke="#1b1b1b" stroke-width="2"/><path d="M10 17 Q14 14 18 17" fill="none" stroke="#1b1b1b" stroke-width="2"/><circle cx="14" cy="20" r="2" fill="#1b1b1b"/></svg>
<svg class="a" style="left:1675px;top:1031px" width="28" height="26" viewBox="0 0 28 26"><path d="M2 9 H6 L12 4 V22 L6 17 H2 Z" fill="none" stroke="#1b1b1b" stroke-width="1.8" stroke-linejoin="round"/><path d="M16 9 Q18.5 13 16 17 M19.5 6 Q24 13 19.5 20" fill="none" stroke="#1b1b1b" stroke-width="1.8"/></svg>
<svg class="a" style="left:1710px;top:1030px" width="30" height="26" viewBox="0 0 30 26"><rect x="2" y="8" width="22" height="13" rx="2.5" fill="none" stroke="#1b1b1b" stroke-width="2"/><rect x="25" y="11.5" width="3" height="6" rx="1" fill="#1b1b1b"/><rect x="5" y="11" width="16" height="7" fill="#1b1b1b"/><path d="M8 2 L4 9 H8 L6 14" fill="none" stroke="#1b1b1b" stroke-width="1.8"/></svg>
<div class="a" style="left:1740px;top:1020px;width:115px;text-align:right;font-size:18.5px;color:#1b1b1b;white-space:nowrap">12:27 am</div>
<div class="a" style="left:1740px;top:1044px;width:115px;text-align:right;font-size:18.5px;color:#1b1b1b;white-space:nowrap">09/05/2025</div>
<svg class="a" style="left:1866px;top:1030px" width="26" height="28" viewBox="0 0 26 28"><path d="M13 4 Q5 4 5 13 V19 L2.5 22 H23.5 L21 19 V13 Q21 4 13 4Z" fill="#1b1b1b"/><path d="M10 24 Q13 27 16 24" fill="#1b1b1b"/><text x="10" y="16" font-size="9" font-weight="bold" fill="#fff" font-family="Liberation Sans">z</text><text x="16" y="9" font-size="9" font-weight="bold" fill="#1b1b1b" font-family="Liberation Sans">z</text></svg>

<!-- LEFT ANNOTATION TOOLBAR -->
<div class="a" style="left:0;top:219px;width:11px;height:69px;background:#2f6df3;border-radius:3px 0 0 8px"></div>
<div class="a" style="left:74px;top:218px;width:20px;height:790px;background:#c9c1e1"></div>
<div class="a" style="left:62px;top:46px;width:16px;height:950px;background:rgba(20,14,40,.65);filter:blur(6px);border-radius:10px"></div>
<div class="a" style="left:10px;top:39px;width:64px;height:954px;border-radius:12px;background:#28292d;border:1px solid #3a3b3f"></div>
<div class="a" style="left:18px;top:53px;width:48px;height:48px;border-radius:9px;background:#1b72ee"></div>
<svg class="a" style="left:30px;top:63px" width="26" height="28" viewBox="0 0 26 28"><path d="M5 2.5 L22.5 16 L14.5 16.5 L6 25.5 Z" fill="none" stroke="#fff" stroke-width="1.8" stroke-linejoin="round"/></svg>
<svg class="a" style="left:30px;top:126px" width="23" height="23" viewBox="0 0 28 28"><g fill="#fff"><path d="M14 1 L19 6.5 H15.5 V12.5 H21.5 V9 L27 14 L21.5 19 V15.5 H15.5 V21.5 H19 L14 27 L9 21.5 H12.5 V15.5 H6.5 V19 L1 14 L6.5 9 V12.5 H12.5 V6.5 H9 Z"/></g></svg>
<svg class="a" style="left:30px;top:185px" width="24" height="26" viewBox="0 0 24 26"><path d="M3 3 H21 M12 3 V23 M7 23 H17" fill="none" stroke="#fff" stroke-width="2.2"/><path d="M3 2 V6 M21 2 V6" stroke="#fff" stroke-width="2"/></svg>
<svg class="a" style="left:29px;top:243px" width="26" height="26" viewBox="0 0 26 26"><path d="M4 22 L5 16.5 L17.5 4 Q19.5 2 21.5 4 L22 4.5 Q24 6.5 22 8.5 L9.5 21 Z M15 6.5 L19.5 11" fill="none" stroke="#fff" stroke-width="1.9" stroke-linejoin="round"/></svg>
<svg class="a" style="left:28px;top:303px" width="28" height="28" viewBox="0 0 28 28"><path d="M3 15 L10.5 22 L25 6.5" fill="none" stroke="#fff" stroke-width="3" stroke-linecap="round" stroke-linejoin="round"/></svg>
<svg class="a" style="left:28px;top:363px" width="28" height="28" viewBox="0 0 28 28"><circle cx="14" cy="14" r="4.2" fill="#fff"/><circle cx="14" cy="14" r="7.5" fill="none" stroke="#fff" stroke-width="1.8"/><path d="M3.5 11 A11 11 0 0 1 11 3.5 M17 3.5 A11 11 0 0 1 24.5 11 M24.5 17 A11 11 0 0 1 17 24.5 M11 24.5 A11 11 0 0 1 3.5 17" fill="none" stroke="#fff" stroke-width="1.6"/></svg>
<svg class="a" style="left:28px;top:423px" width="28" height="28" viewBox="0 0 28 28"><path d="M3.5 16 L14 5.5 Q16 3.5 18 5.5 L23 10.5 Q25 12.5 23 14.5 L12.5 25 Q10.5 27 8.5 25 L3.5 20 Q1.5 18 3.5 16 Z M9 11 L18 20" fill="none" stroke="#fff" stroke-width="1.8"/></svg>
<div class="a" style="left:30px;top:485px;width:25px;height:25px;border-radius:50%;background:#7a52a8"></div>
<svg class="a" style="left:29px;top:543px" width="26" height="26" viewBox="0 0 26 26"><path d="M8 4 L3.5 8.5 L8 13" fill="none" stroke="#fff" stroke-width="2" stroke-linejoin="round"/><path d="M4 8.5 H15 Q22 8.5 22 15 Q22 22 15 22 H7" fill="none" stroke="#fff" stroke-width="2"/></svg>
<svg class="a" style="left:29px;top:603px" width="26" height="26" viewBox="0 0 26 26"><path d="M18 4 L22.5 8.5 L18 13" fill="none" stroke="#fff" stroke-width="2" stroke-linejoin="round"/><path d="M22 8.5 H11 Q4 8.5 4 15 Q4 22 11 22 H19" fill="none" stroke="#fff" stroke-width="2"/></svg>
<svg class="a" style="left:28px;top:663px" width="28" height="28" viewBox="0 0 28 28"><path d="M4 7 H24 M10.5 6.5 V3.5 H17.5 V6.5 M6.5 8 L8 24.5 Q8.2 25.5 9.5 25.5 H18.5 Q19.8 25.5 20 24.5 L21.5 8 M11.5 12 V21 M16.5 12 V21" fill="none" stroke="#fff" stroke-width="2.2" stroke-linejoin="round"/></svg>
<svg class="a" style="left:28px;top:720px" width="28" height="30" viewBox="0 0 28 30"><path d="M14 3 V19 M7.5 12.5 L14 19 L20.5 12.5 M4 26 H24" fill="none" stroke="#fff" stroke-width="2.2"/></svg>
<div class="a" style="left:24px;top:785px;width:36px;height:2px;background:#6b6b6e"></div>
<div class="a" style="left:27px;top:831px;width:7px;height:7px;border-radius:50%;background:#fff"></div>
<div class="a" style="left:38px;top:831px;width:7px;height:7px;border-radius:50%;background:#fff"></div>
<div class="a" style="left:49px;top:831px;width:7px;height:7px;border-radius:50%;background:#fff"></div>
<svg class="a" style="left:28px;top:881px" width="28" height="28" viewBox="0 0 28 28"><circle cx="12" cy="7.5" r="3.8" fill="none" stroke="#fff" stroke-width="1.6"/><path d="M5 21 Q5 14.5 12 14.5 Q13.5 14.5 14.5 15" fill="none" stroke="#fff" stroke-width="1.6"/><path d="M5 21 H12" stroke="#fff" stroke-width="1.6"/><path d="M19.5 13.5 L25 15.5 V19.5 Q25 23.5 19.5 25.5 Q14 23.5 14 19.5 V15.5 Z" fill="#3d8ef5"/></svg>
<div class="a" style="left:24px;top:937px;width:36px;height:36px;border-radius:7px;background:#e0292b"></div>
<svg class="a" style="left:30px;top:943px" width="24" height="24" viewBox="0 0 24 24"><path d="M4 4 L20 20 M20 4 L4 20" stroke="#fff" stroke-width="2.4" stroke-linecap="round"/></svg>
</body></html>
